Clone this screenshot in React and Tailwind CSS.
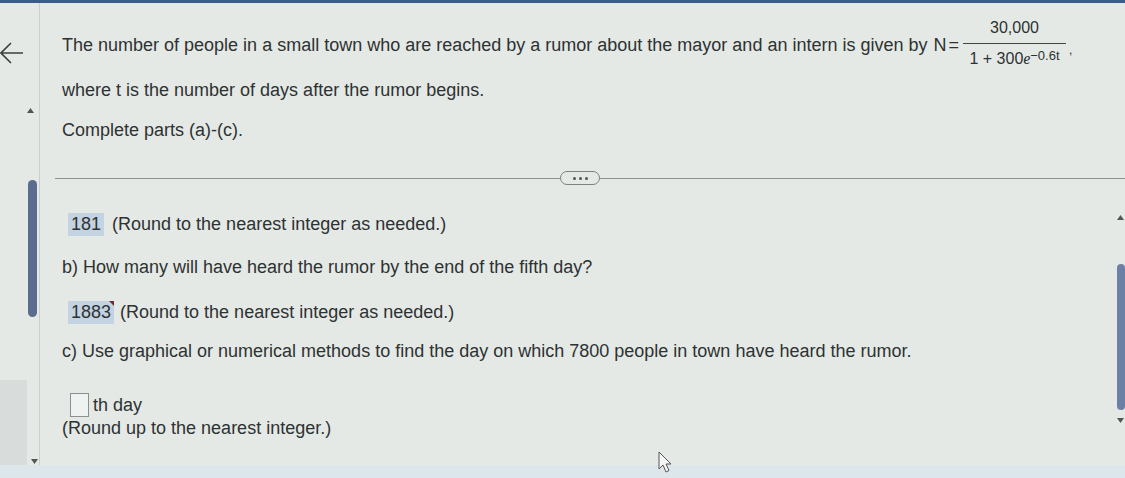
import React from "react";

function Tri({ up, className }) {
  return (
    <svg width="7" height="5" viewBox="0 0 7 5" className={className}>
      {up ? <polygon points="0,5 7,5 3.5,0" fill="#555" /> : <polygon points="0,0 7,0 3.5,5" fill="#555" />}
    </svg>
  );
}

export default function App() {
  return (
    <div
      className="w-[1125px] h-[478px] bg-[#e4e9e6] border-t-[3px] border-[#3a5b8e] flex flex-col overflow-hidden relative text-[#2e3232]"
      style={{ fontFamily: '"Liberation Sans", Arial, sans-serif' }}
    >
      <div className="flex flex-1 min-h-0">
        {/* left column */}
        <div className="w-[40px] shrink-0 border-r border-[#c9cfcc] flex flex-col">
          <svg width="24" height="24" viewBox="0 0 24 24" className="mt-[38px]">
            <path d="M23 12H1M11 2L1 12l10 10" fill="none" stroke="#3c3f3f" strokeWidth="1.6" />
          </svg>
          <Tri up className="ml-[27px] mt-[43px]" />
          <div className="ml-[28px] mt-[67px] w-[9px] h-[137px] rounded-full bg-[#5b6c8e]" />
          <div className="flex items-end mt-[62px] flex-1">
            <div className="w-[27px] h-[85px] bg-[#d8dcda]" />
            <Tri className="ml-[4px] mb-[1px]" />
          </div>
        </div>

        {/* main */}
        <div className="flex-1 flex flex-col min-w-0">
          {/* question */}
          <div className="pl-[22px] text-[18px]">
            <div className="h-[50px] mt-[17px] flex items-center whitespace-nowrap">
              <span>The number of people in a small town who are reached by a rumor about the mayor and an intern is given by</span>
              <span className="ml-[6px]">N</span>
              <span className="ml-[2px]">=</span>
              <span className="ml-[4px] inline-flex flex-col items-center leading-none">
                <span className="pb-[7px] text-[16px] -mt-[4px]">30,000</span>
                <span className="w-[103px] h-px bg-[#444]" />
                <span className="pt-[7px] text-[16px]">
                  1 + 300<i className="font-serif">e</i>
                  <sup className="text-[13px] relative -top-[4px]">−0.6t</sup>
                </span>
              </span>
              <span className="ml-[3px] text-[12px] self-center mt-[10px]">,</span>
            </div>
            <div className="h-[24px] leading-[24px] mt-[8px]">where t is the number of days after the rumor begins.</div>
            <div className="h-[24px] leading-[24px] mt-[16px]">Complete parts (a)-(c).</div>
          </div>

          {/* divider */}
          <div className="ml-[15px] mt-[29px] flex items-center">
            <div className="flex-1 h-px bg-[#8e9391] max-w-[505px]" />
            <div className="w-[40px] h-[14px] rounded-full border border-[#7d8280] flex items-center justify-center gap-[3px]">
              <span className="w-[3px] h-[3px] rounded-full bg-[#555]" />
              <span className="w-[3px] h-[3px] rounded-full bg-[#555]" />
              <span className="w-[3px] h-[3px] rounded-full bg-[#555]" />
            </div>
            <div className="flex-1 h-px bg-[#8e9391]" />
          </div>

          {/* answers */}
          <div className="flex flex-1 min-h-0">
            <div className="flex-1 pl-[22px] text-[18px]">
              <div className="mt-[27px] h-[24px] flex items-center">
                <span className="ml-[6px] px-[3px] h-[23px] leading-[23px] bg-[#c3d3e1]">181</span>
                <span className="ml-[8px]">(Round to the nearest integer as needed.)</span>
              </div>
              <div className="mt-[19px] h-[24px] leading-[24px]">b) How many will have heard the rumor by the end of the fifth day?</div>
              <div className="mt-[21px] h-[24px] flex items-center">
                <span className="ml-[6px] px-[3px] h-[23px] leading-[23px] bg-[#c3d3e1] relative">
                  1883
                  <span className="absolute right-0 top-0 w-0 h-0 border-t-[5px] border-l-[5px] border-t-[#6b2a3a] border-l-transparent" />
                </span>
                <span className="ml-[6px]">(Round to the nearest integer as needed.)</span>
              </div>
              <div className="mt-[15px] h-[24px] leading-[24px]">c) Use graphical or numerical methods to find the day on which 7800 people in town have heard the rumor.</div>
              <div className="mt-[30px] h-[24px] flex items-center">
                <span className="ml-[8px] w-[19px] h-[24px] border border-[#8b908e] bg-[#eef2f0]" />
                <span className="ml-[4px]">th day</span>
              </div>
              <div className="h-[22px] leading-[22px]">(Round up to the nearest integer.)</div>
            </div>
            {/* right scrollbar */}
            <div className="w-[9px] shrink-0 flex flex-col items-center">
              <Tri up className="mt-[30px]" />
              <div className="mt-[44px] w-[8px] h-[146px] rounded-full bg-[#6c80a6]" />
              <Tri className="mt-[8px]" />
            </div>
          </div>
        </div>
      </div>
      <div className="h-[13px] bg-[#dde6ea]" />

      {/* mouse cursor */}
      <svg width="14" height="22" viewBox="0 0 14 22" className="absolute left-[658px] top-[448px]">
        <path d="M1 1v17l4-4 3 7 3-1.5-3-6.5h5z" fill="#f4f6f6" stroke="#555" strokeWidth="1" />
      </svg>
    </div>
  );
}
